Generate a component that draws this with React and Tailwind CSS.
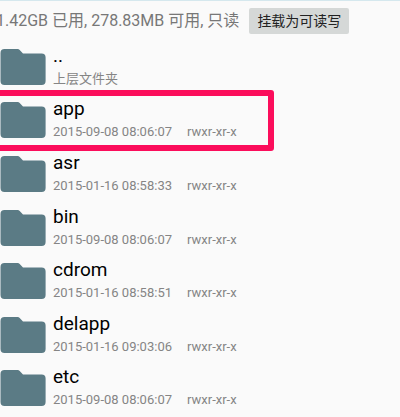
import { useState } from 'react'

const entries = [
  { name: '..', detail: '上层文件夹' },
  { name: 'app', detail: '2015-09-08 08:06:07', mode: 'rwxr-xr-x' },
  { name: 'asr', detail: '2015-01-16 08:58:33', mode: 'rwxr-xr-x' },
  { name: 'bin', detail: '2015-09-08 08:06:07', mode: 'rwxr-xr-x' },
  { name: 'cdrom', detail: '2015-01-16 08:58:51', mode: 'rwxr-xr-x' },
  { name: 'delapp', detail: '2015-01-16 09:03:06', mode: 'rwxr-xr-x' },
  { name: 'etc', detail: '2015-09-08 08:06:07', mode: 'rwxr-xr-x' },
]

function FolderIcon() {
  return (
    <svg className="w-[46px] h-9 shrink-0" viewBox="0 0 46 36" fill="#5b7b85" aria-hidden="true">
      <path d="M4.5 0H17.6c.8 0 1.6.3 2.1.9L23 4.4h18.6a4 4 0 0 1 4 4V32a4 4 0 0 1-4 4H4.5a4 4 0 0 1-4-4V4a4 4 0 0 1 4-4z" />
    </svg>
  )
}

function EntryRow({ entry, marked, onSelect }) {
  return (
    <li className="relative flex-1 flex">
      <button type="button" onClick={onSelect} className="w-full flex items-center gap-[7px] text-left">
        <FolderIcon />
        <span className="flex flex-col gap-px pb-px">
          <span className="text-[19px] leading-6 text-black">{entry.name}</span>
          <span className="flex gap-[15px] text-[13px] leading-5 text-[#858585]">
            <span>{entry.detail}</span>
            {entry.mode && <span>{entry.mode}</span>}
          </span>
        </span>
      </button>

      {/* Highlight frame, runs off the left edge */}
      {marked && (
        <span className="pointer-events-none absolute -top-1 -bottom-1 -left-2 w-[282px] border-6 border-[#fb0d5b] rounded-[3px]" />
      )}
    </li>
  )
}

export default function App() {
  const [selected, setSelected] = useState('app')
  const [writable, setWritable] = useState(false)

  return (
    <div className="min-h-screen flex flex-col overflow-hidden bg-[#fafafa] border-t border-[#d5e8ee] pb-0.5 font-['Roboto','Noto_Sans_CJK_SC',sans-serif]">
      <header className="shrink-0 h-[39px] flex items-center gap-[10px] -ml-1 whitespace-nowrap">
        <p className="text-base text-[#777777]">
          1.42GB 已用, 278.83MB 可用, {writable ? '读写' : '只读'}
        </p>
        <button
          type="button"
          onClick={() => setWritable(!writable)}
          className="h-[26px] px-2 rounded-[2px] bg-[#d5d8d7] text-sm text-[#222222]"
        >
          {writable ? '挂载为只读' : '挂载为可读写'}
        </button>
      </header>

      <ul className="flex-1 flex flex-col">
        {entries.map(entry => (
          <EntryRow
            key={entry.name}
            entry={entry}
            marked={entry.name === selected}
            onSelect={() => setSelected(entry.name)}
          />
        ))}
      </ul>
    </div>
  )
}
